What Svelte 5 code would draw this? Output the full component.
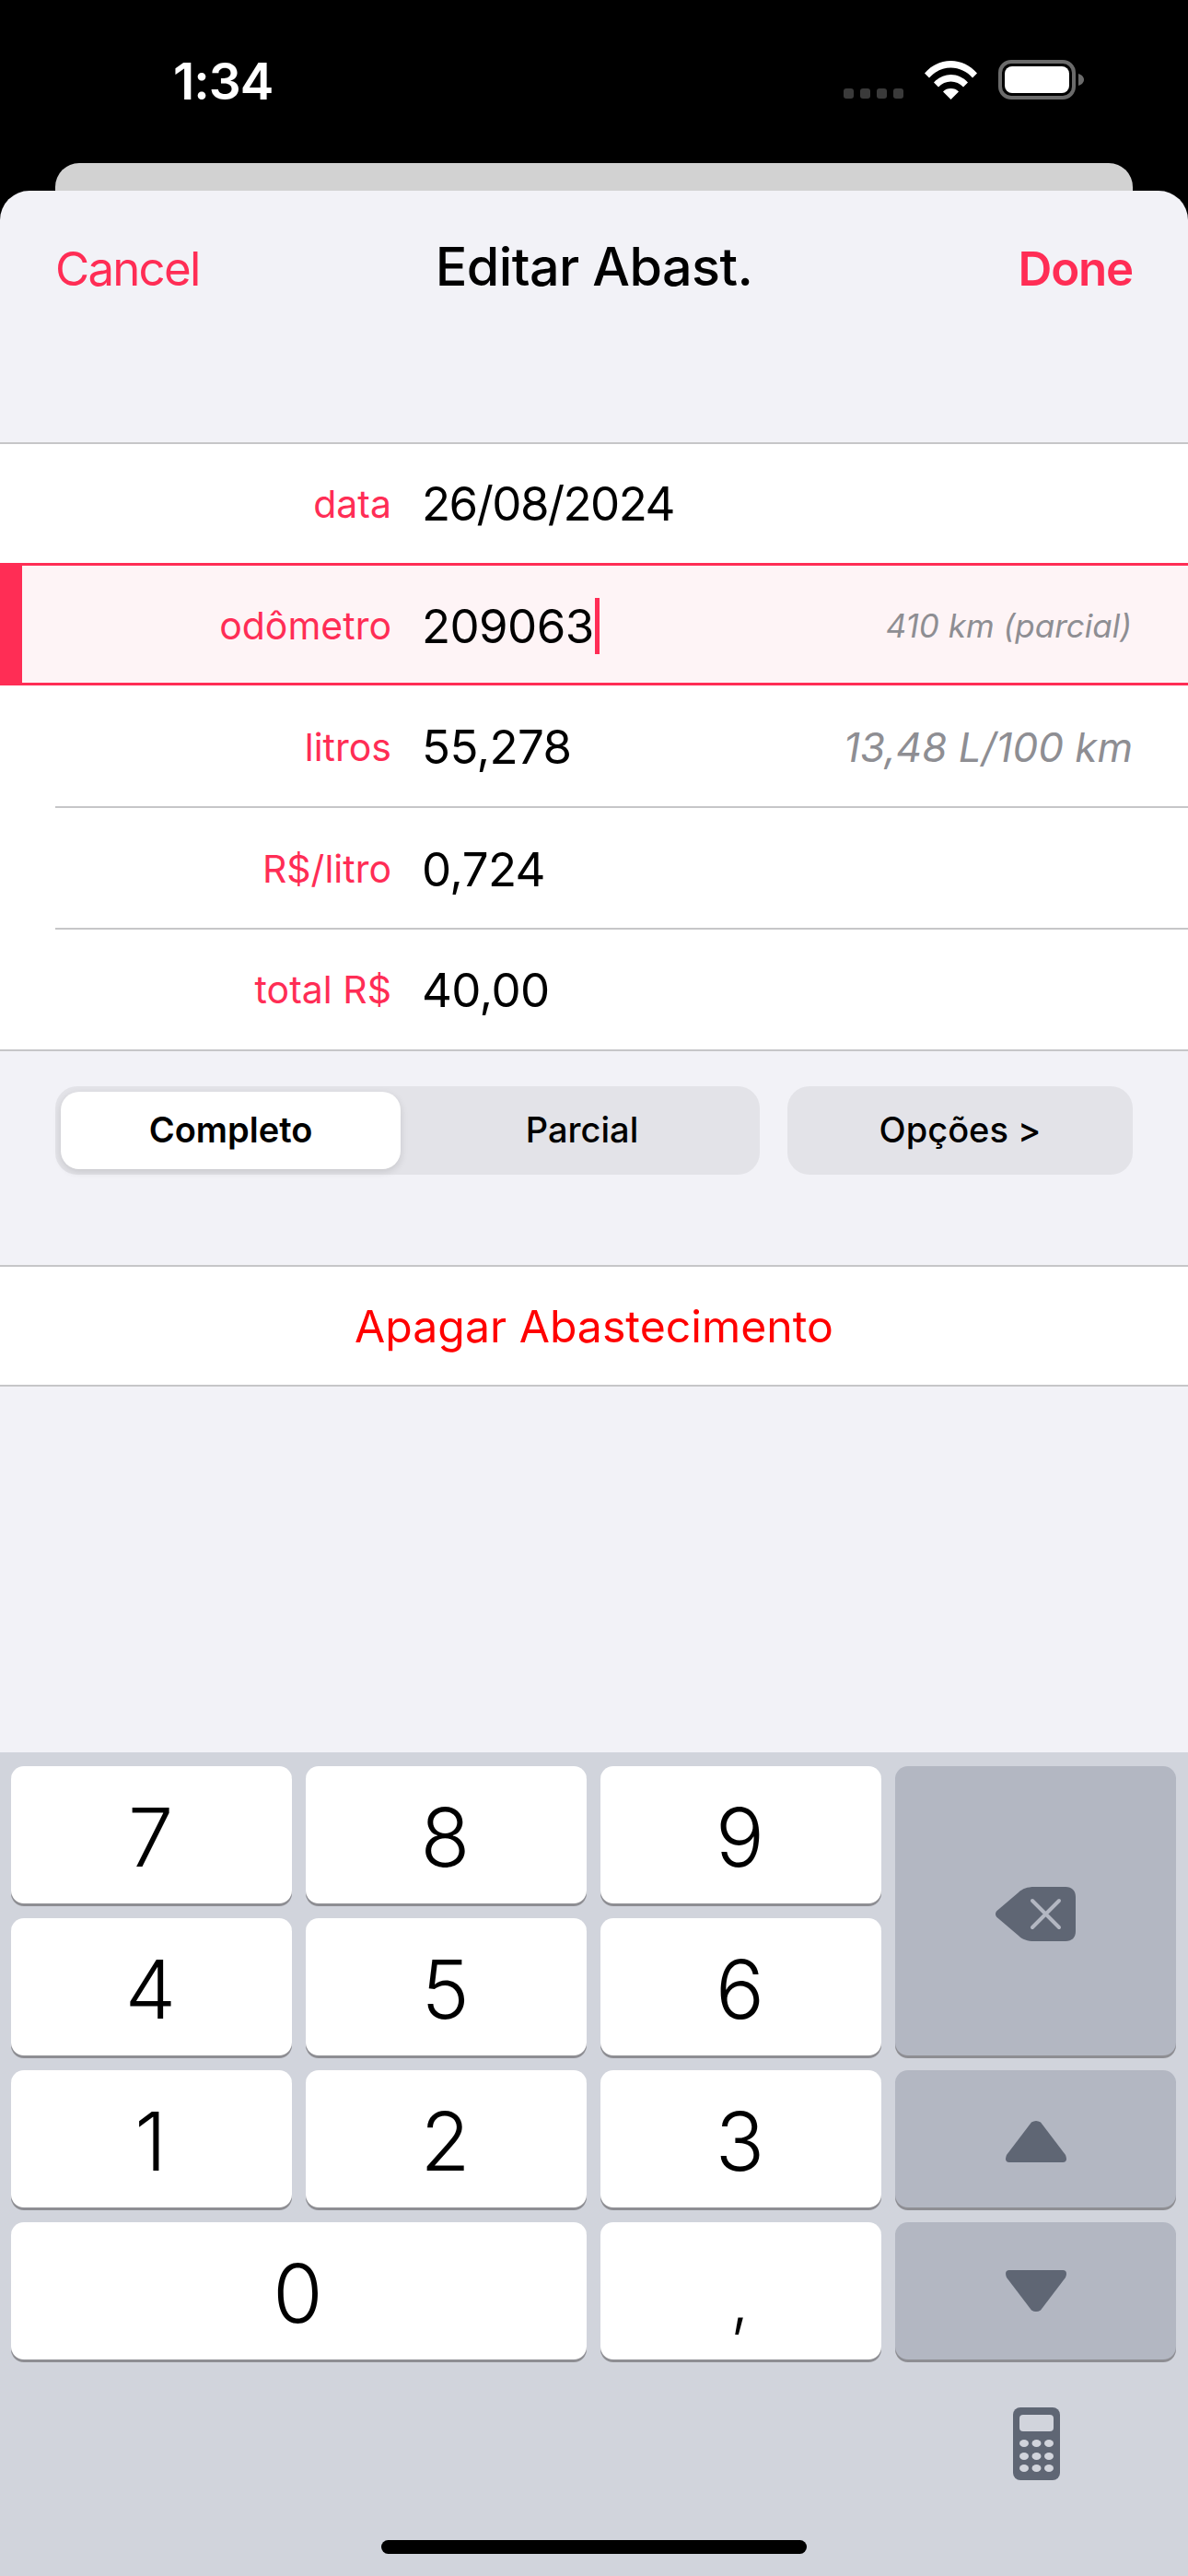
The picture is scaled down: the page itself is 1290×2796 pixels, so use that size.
<script lang="ts">
	const rows = [
		{ label: 'data', value: '26/08/2024' },
		{ label: 'odômetro', value: '209063', hint: '410 km (parcial)', active: true },
		{ label: 'litros', value: '55,278', hint: '13,48 L/100 km', big: true, line: true },
		{ label: 'R$/litro', value: '0,724', line: true },
		{ label: 'total R$', value: '40,00' }
	];
</script>

<div class="phone">
	<header class="status">
		<span class="time">1:34</span>
		<div class="status-icons">
			<div class="signal"><i></i><i></i><i></i><i></i></div>
			<svg class="wifi" viewBox="0 0 57 42" width="57" height="42">
				<path fill="#fff" d="M0 13.5C7.500 5 17.500 0 28.500 0S49.500 5 57 13.500L52 18.500C46 11.500 37.500 7.500 28.500 7.500S11 11.500 5 18.500Z" />
				<path fill="#fff" d="M10 23.500C15 18 21.500 15 28.500 15S42 18 47 23.500L42 28.500C38.500 24.500 33.500 22.500 28.500 22.500S18.500 24.500 15 28.500Z" />
				<path fill="#fff" d="M20 33.500C22 31 25 30 28.500 30S35 31 37 33.500L28.500 42Z" />
			</svg>
			<svg class="battery" viewBox="0 0 93 43" width="93" height="43">
				<rect x="2" y="2" width="80" height="39" rx="12" fill="none" stroke="#6b6b6b" stroke-width="4" />
				<rect x="7" y="7" width="70" height="29" rx="8" fill="#fff" />
				<path fill="#6b6b6b" d="M87 15c3 1 6 3 6 6.500s-3 5.500-6 6.500z" />
			</svg>
		</div>
	</header>

	<div class="back-card"></div>

	<section class="sheet">
		<nav class="nav">
			<span class="cancel">Cancel</span>
			<span class="title">Editar Abast.</span>
			<span class="done">Done</span>
		</nav>

		<div class="form">
			{#each rows as row}
				<div class="row" class:active={row.active}>
					<span class="label">{row.label}</span>
					<span class="value">{row.value}{#if row.active}<i class="caret"></i>{/if}</span>
					{#if row.hint}
						<span class="hint" class:big={row.big}>{row.hint}</span>
					{/if}
					{#if row.line}<i class="sep"></i>{/if}
				</div>
			{/each}
		</div>

		<div class="controls">
			<div class="segmented">
				<span class="seg selected">Completo</span>
				<span class="seg second">Parcial</span>
			</div>
			<span class="options">Opções &gt;</span>
		</div>

		<div class="delete">Apagar Abastecimento</div>
	</section>

	<section class="keyboard">
		<div class="keys">
			<span class="key">7</span>
			<span class="key">8</span>
			<span class="key">9</span>
			<span class="key fn tall nudge">
				<svg viewBox="0 0 87 59" width="87" height="59">
					<path fill="#5f6674" d="M1.500 26C-.5 28-.5 31 1.500 33L25 53C29 57 35 59 42 59H76C83 59 87 55 87 48V11C87 4 83 0 76 0H42C35 0 29 2 25 6Z" />
					<path stroke="#b3b7c2" stroke-width="4" stroke-linecap="round" d="M40 15L69 44M69 15L40 44" />
				</svg>
			</span>
			<span class="key">4</span>
			<span class="key">5</span>
			<span class="key">6</span>
			<span class="key">1</span>
			<span class="key">2</span>
			<span class="key">3</span>
			<span class="key fn nudge">
				<svg viewBox="0 0 66 45" width="66" height="45">
					<path fill="#5f6674" d="M28 1.500Q33 -1.500 38 1.500L65 37Q68 44.500 62 45H4Q-2 44.500 1 37Z" />
				</svg>
			</span>
			<span class="key zero">0</span>
			<span class="key comma">,</span>
			<span class="key fn">
				<svg viewBox="0 0 66 45" width="66" height="45">
					<path fill="#5f6674" d="M28 43.500Q33 46.500 38 43.500L65 8Q68 .5 62 0H4Q-2 .5 1 8Z" />
				</svg>
			</span>
		</div>

		<div class="kb-bottom">
			<svg viewBox="0 0 51 79" width="51" height="79">
				<rect width="51" height="79" rx="8" fill="#5f6674" />
				<rect x="7" y="8" width="37" height="18" rx="4" fill="#d1d4dc" />
				{#each [36, 50, 63] as y}
					{#each [12, 25.500, 39] as x}
						<ellipse cx={x} cy={y + 3} rx="5" ry="4" fill="#d1d4dc" />
					{/each}
				{/each}
			</svg>
		</div>

		<div class="home"></div>
	</section>
</div>

<style>
	:global(body) {
		margin: 0;
		background: #000;
	}

	.phone {
		width: 1290px;
		height: 2796px;
		display: flex;
		flex-direction: column;
		overflow: hidden;
		font-family: Inter, 'Liberation Sans', sans-serif;
		background: #000;
		color: #000;
	}

	.status {
		height: 177px;
		box-sizing: border-box;
		padding: 56px 113px 0 188px;
		display: flex;
		justify-content: space-between;
		align-items: flex-start;
		flex: none;
	}

	.time {
		color: #fff;
		font-size: 55px;
		font-weight: 600;
		line-height: 62px;
		letter-spacing: -1px;
		margin-top: 1px;
	}

	.status-icons {
		display: flex;
		align-items: flex-end;
		margin-top: 9px;
		gap: 23px;
	}

	.signal {
		display: flex;
		gap: 7px;
		padding-bottom: 1px;
	}

	.signal i {
		width: 11px;
		height: 11px;
		border-radius: 3px;
		background: #3a3a3a;
	}

	.back-card {
		height: 30px;
		margin: 0 60px;
		flex: none;
		background: #d2d2d2;
		border-radius: 26px 26px 0 0;
	}

	.sheet {
		height: 1695px;
		flex: none;
		background: #f2f2f7;
		border-radius: 32px 32px 0 0;
		display: flex;
		flex-direction: column;
	}

	.nav {
		height: 275px;
		box-sizing: border-box;
		padding: 54px 60px 0;
		display: grid;
		grid-template-columns: 1fr auto 1fr;
		align-items: start;
		font-size: 51px;
		line-height: 62px;
		border-bottom: 2px solid #c6c6c8;
	}

	.cancel {
		color: #ff2d55;
		letter-spacing: -1.8px;
	}

	.title {
		font-weight: 500;
		font-size: 57.500px;
		letter-spacing: -0.6px;
		margin-top: -3px;
	}

	.done {
		color: #ff2d55;
		font-weight: 600;
		text-align: right;
		letter-spacing: -1.2px;
	}

	.form {
		background: #fff;
		border-bottom: 2px solid #c6c6c8;
		display: flex;
		flex-direction: column;
	}

	.row {
		position: relative;
		height: 132px;
		box-sizing: border-box;
		display: flex;
		align-items: center;
		padding-right: 60px;
	}

	.row:first-child {
		height: 129px;
	}

	.row:first-child .value {
		letter-spacing: -1.6px;
	}

	.row:nth-child(3) {
		height: 133px;
	}

	.row:last-child {
		height: 130px;
	}

	.row.active {
		border-top: 3px solid #ff2d55;
		border-bottom: 3px solid #ff2d55;
		border-left: 24px solid #ff2d55;
		background: #fef4f6;
		height: 133px;
		padding-top: 3px;
		padding-right: 61px;
	}

	.label {
		width: 425px;
		flex: none;
		text-align: right;
		color: #ff2d55;
		font-size: 41px;
	}

	.active .label {
		width: 401px;
	}

	.value {
		margin-left: 33px;
		font-size: 51px;
		display: flex;
		align-items: center;
		letter-spacing: -0.6px;
	}

	.caret {
		width: 5px;
		height: 61px;
		margin-left: 1px;
		background: #ff2d55;
	}

	.hint {
		margin-left: auto;
		color: #8e8e93;
		font-style: italic;
		font-size: 35px;
	}

	.hint.big {
		font-size: 44px;
	}

	.sep {
		position: absolute;
		left: 60px;
		right: 0;
		bottom: 0;
		height: 2px;
		background: #c6c6c8;
	}

	.controls {
		display: flex;
		gap: 30px;
		padding: 38px 60px 98px;
		height: 96px;
	}

	.segmented {
		width: 765px;
		height: 96px;
		box-sizing: border-box;
		padding: 6px;
		display: grid;
		grid-template-columns: 369px 1fr;
		background: #e3e3e8;
		border-radius: 24px;
	}

	.seg,
	.options {
		display: flex;
		align-items: center;
		justify-content: center;
		font-size: 38px;
		font-weight: 450;
		padding-bottom: 2px;
		box-sizing: border-box;
	}

	.seg.selected {
		background: #fff;
		border-radius: 20px;
		font-weight: 600;
		box-shadow: 0 3px 8px rgba(0, 0, 0, 0.12);
	}

	.seg.second {
		padding-left: 10px;
	}

	.options {
		flex: 1;
		height: 96px;
		background: #e3e3e8;
		border-radius: 24px;
	}

	.delete {
		height: 132px;
		box-sizing: border-box;
		display: flex;
		align-items: center;
		justify-content: center;
		background: #fff;
		color: #f00;
		font-size: 48.200px;
		border-top: 2px solid #c6c6c8;
		border-bottom: 2px solid #c6c6c8;
	}

	.keyboard {
		flex: 1;
		background: #d1d4dc;
		padding-top: 15px;
		box-sizing: border-box;
		display: flex;
		flex-direction: column;
	}

	.keys {
		display: grid;
		grid-template-columns: repeat(4, 305px);
		grid-auto-rows: 149px;
		column-gap: 15px;
		row-gap: 16px;
		padding: 0 13px 0 12px;
	}

	.key {
		background: #fff;
		border-radius: 14px;
		box-shadow: 0 3px 0 #8e8e93;
		display: flex;
		align-items: center;
		justify-content: center;
		font-size: 88px;
		font-weight: 300;
		padding: 5px 2px 0 0;
		box-sizing: border-box;
	}

	.key.fn {
		background: #b3b7c2;
		grid-column: 4;
		padding: 0;
	}

	.key.fn.nudge {
		padding-top: 6px;
	}

	.key.tall {
		grid-row: span 2;
	}

	.key.zero {
		grid-column: span 2;
	}

	.key.comma {
		align-items: flex-end;
		padding: 0 2px 22px 0;
		font-size: 72px;
	}

	.kb-bottom {
		display: flex;
		justify-content: flex-end;
		padding: 52px 139px 0 0;
	}

	.home {
		width: 462px;
		height: 15px;
		margin: 65px auto 0;
		border-radius: 8px;
		background: #000;
	}
</style>
